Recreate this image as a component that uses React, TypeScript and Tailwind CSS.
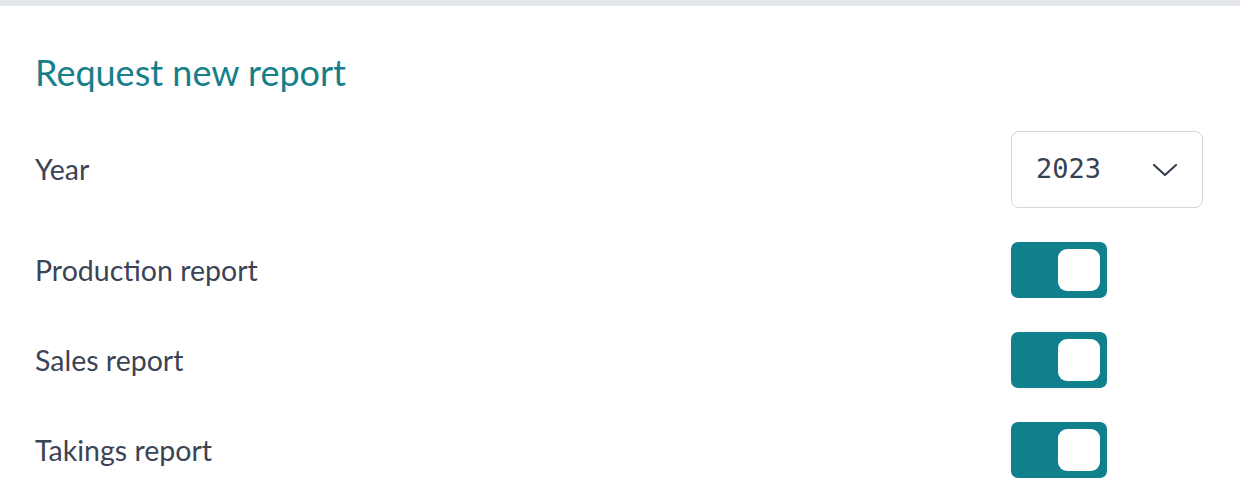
import { useState } from "react";

const Toggle = ({ on, onChange }: { on: boolean; onChange: () => void }) => (
  <button
    onClick={onChange}
    className={`flex h-[56px] w-[96px] items-center rounded-[7px] p-[7px] ${
      on ? "justify-end bg-[#0f808c]" : "justify-start bg-[#cbd5e1]"
    }`}
  >
    <span className="block h-[42px] w-[42px] rounded-[9px] bg-white" />
  </button>
);

const App = () => {
  const [reports, setReports] = useState({
    production: true,
    sales: true,
    takings: true,
  });

  const rows: { key: keyof typeof reports; label: string }[] = [
    { key: "production", label: "Production report" },
    { key: "sales", label: "Sales report" },
    { key: "takings", label: "Takings report" },
  ];

  return (
    <div className="min-h-screen bg-white font-['Lato',sans-serif]">
      <div className="h-[6px] bg-[#e4e7eb]" />
      <div className="pl-[35px] pr-[37px] pt-[44px]">
        <h2 className="text-[36px] leading-[44px] text-[#167f8a]">Request new report</h2>
        <div className="mt-[37px] flex flex-col gap-[34px]">
          <div className="flex items-center justify-between">
            <span className="text-[28.5px] text-[#3b4455]">Year</span>
            <div className="flex h-[77px] w-[192px] items-center justify-between rounded-[8px] border border-[#d3d7dc] pl-[24px] pr-[24px]">
              <span className="font-['DejaVu_Sans_Mono',monospace] text-[27px] font-light text-[#374151]">2023</span>
              <svg width="26" height="14" viewBox="0 0 26 14" fill="none">
                <path d="M2 2l11 10 11-10" stroke="#374151" strokeWidth="2.2" strokeLinecap="round" strokeLinejoin="round" />
              </svg>
            </div>
          </div>
          {rows.map((r) => (
            <div key={r.key} className="flex items-center justify-between pr-[96px]">
              <span className="text-[28.5px] text-[#3b4455]">{r.label}</span>
              <Toggle
                on={reports[r.key]}
                onChange={() => setReports({ ...reports, [r.key]: !reports[r.key] })}
              />
            </div>
          ))}
        </div>
      </div>
    </div>
  );
};

export default App;
